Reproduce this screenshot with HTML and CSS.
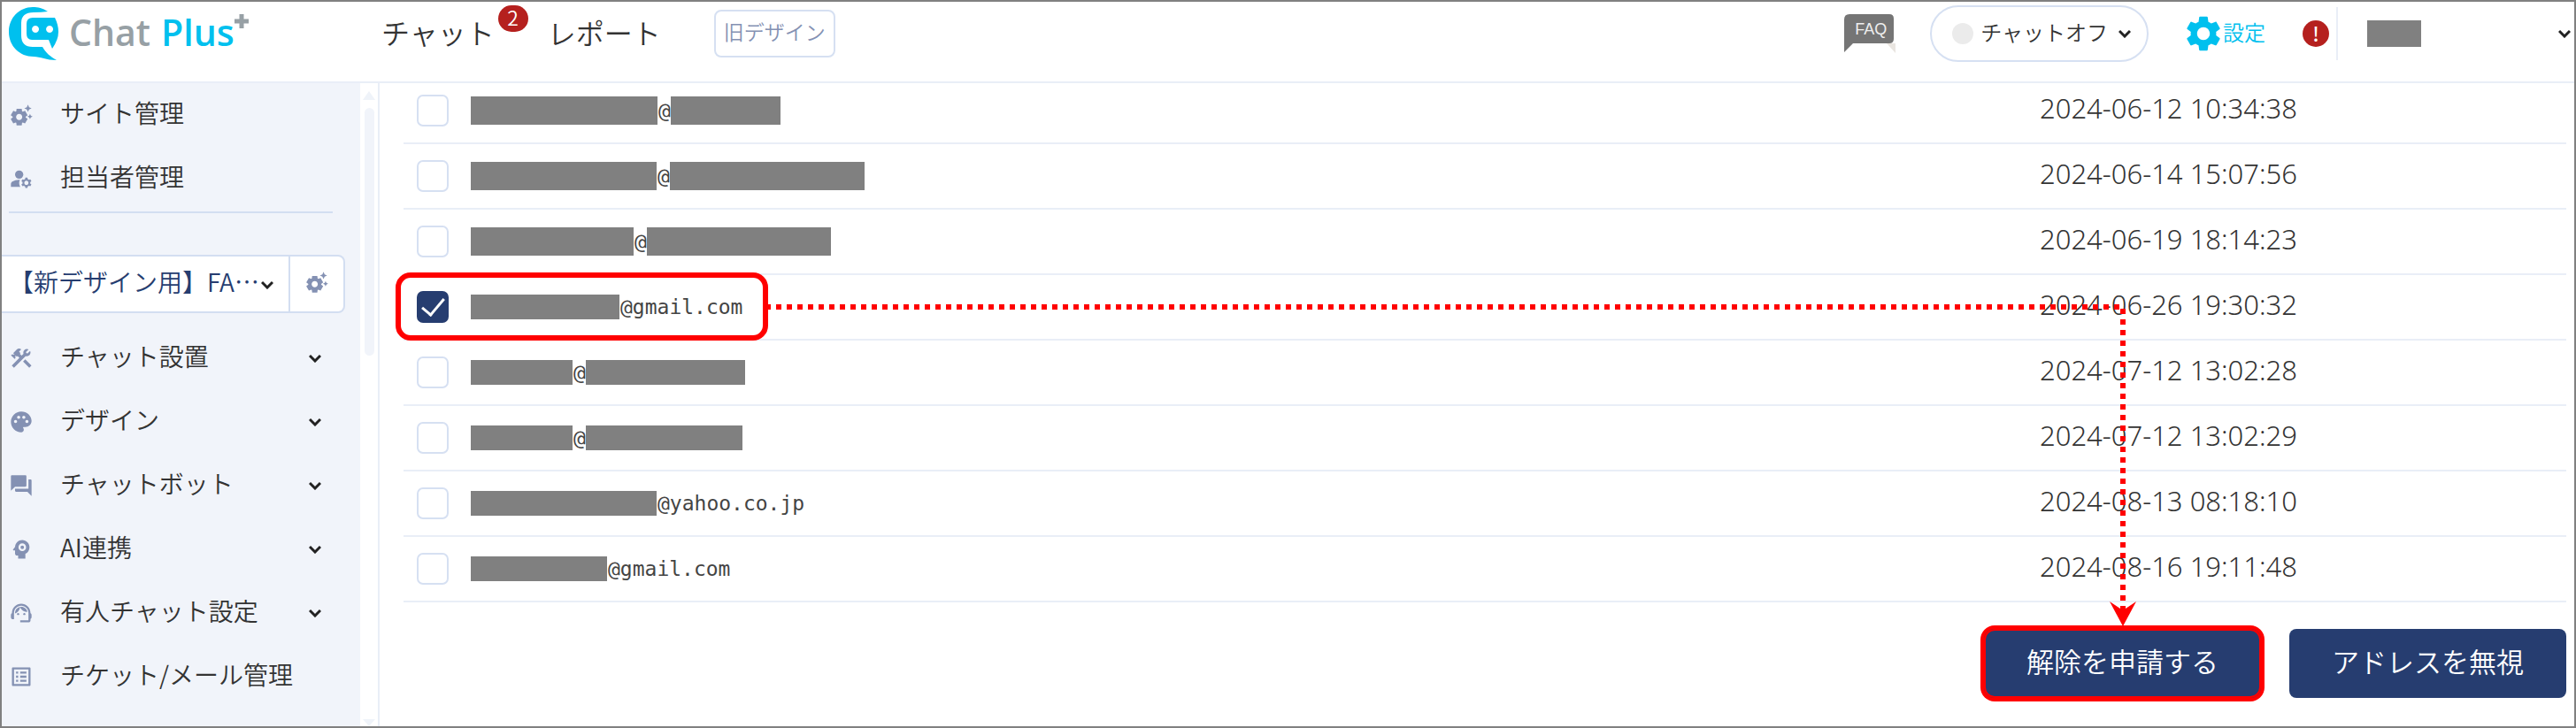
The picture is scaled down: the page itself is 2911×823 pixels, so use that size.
FILE: index.html
```html
<!DOCTYPE html>
<html lang="ja">
<head>
  <meta charset="utf-8">
  <title>Chat Plus</title>
  <link rel="stylesheet" href="styles.css">
</head>
<body>
  <svg class="sprite" aria-hidden="true">
    <symbol id="chevron" viewBox="0 0 14 10"><path d="M1 2l6 6 6-6" fill="none" stroke="currentColor" stroke-width="3"/></symbol>
    <symbol id="suggest" viewBox="0 0 24 24"><path d="M17.41 6.59L15 5.5l2.41-1.09L18.5 2l1.09 2.41L22 5.5l-2.41 1.09L18.5 9l-1.09-2.41zm3.87 6.13L20.5 11l-.78 1.72-1.72.78 1.72.78.78 1.72.78-1.72L23 13.5l-1.72-.78zm-5.04 1.65l1.94 1.47-2.5 4.33-2.24-.94c-.2.13-.42.26-.64.37l-.3 2.4h-5l-.3-2.41c-.22-.11-.43-.23-.64-.37l-2.24.94-2.5-4.33 1.94-1.47c-.01-.11-.01-.24-.01-.36s0-.25.01-.37l-1.94-1.47 2.5-4.33 2.24.94c.2-.13.42-.26.64-.37L7.5 6h5l.3 2.41c.22.11.43.23.64.37l2.24-.94 2.5 4.33-1.94 1.47c.01.12.01.24.01.37s0 .24-.01.36zM13 14c0-1.66-1.34-3-3-3s-3 1.34-3 3 1.34 3 3 3 3-1.34 3-3z"/></symbol>
  </svg>

  <header class="header">
    <a class="logo" href="#">
      <svg width="56" height="60" viewBox="0 0 56 60">
        <path fill="#00c0ee" d="M44 5C38 1 33 0 27 0C12 0 0 12 0 28C0 44 12 56 28 56C36 56 42 60 54 60C47 56 42 52 38 45H27Q14 45 14 32V18Q14 6 28 6Q37 6 44 5z"/>
        <path fill="#00c0ee" fill-rule="evenodd" d="M27 12H52Q56 20 56 28Q56 37 49 47L45 37H26Q20 37 20 30V19Q20 12 27 12zM30 21a4 4 0 1 0 .1 0zM46 21a4 4 0 1 0 .1 0z"/>
      </svg>
      <span class="logo-chat">Chat</span>
      <span class="logo-plus">Plus</span><svg class="logo-cross" width="16" height="16" viewBox="0 0 16 16"><path d="M8 0v16M0 8h16" stroke="#97a0a5" stroke-width="5"/></svg>
    </a>
    <nav class="nav">
      <a href="#">チャット<span class="count">2</span></a>
      <a href="#">レポート</a>
    </nav>
    <button class="old-design">旧デザイン</button>

    <div class="tools">
      <a class="faq" href="#">
        <svg width="58" height="44" viewBox="0 0 58 44">
          <path fill="#e9e5e0" d="M48 33h10v11z"/>
          <path fill="#757575" d="M6 0h45q5 0 5 5v23q0 5-5 5H10L0 43V6q0-6 6-6z"/>
        </svg>
        <span>FAQ</span>
      </a>
      <button class="chat-off"><i class="dot"></i><span class="label">チャットオフ</span><svg class="chevron"><use href="#chevron"/></svg></button>
      <a class="settings" href="#">
        <svg width="48" height="48" viewBox="0 0 24 24"><path d="M19.14 12.94c.04-.3.06-.61.06-.94 0-.32-.02-.64-.07-.94l2.03-1.58c.18-.14.23-.41.12-.61l-1.92-3.32c-.12-.22-.37-.29-.59-.22l-2.39.96c-.5-.38-1.03-.7-1.62-.94l-.36-2.54c-.04-.24-.24-.41-.48-.41h-3.84c-.24 0-.43.17-.47.41l-.36 2.54c-.59.24-1.13.57-1.62.94l-2.39-.96c-.22-.08-.47 0-.59.22L2.74 8.87c-.12.21-.08.47.12.61l2.03 1.58c-.05.3-.09.63-.09.94s.02.64.07.94l-2.03 1.58c-.18.14-.23.41-.12.61l1.92 3.32c.12.22.37.29.59.22l2.39-.96c.5.38 1.03.7 1.62.94l.36 2.54c.05.24.24.41.48.41h3.84c.24 0 .44-.17.47-.41l.36-2.54c.59-.24 1.13-.56 1.62-.94l2.39.96c.22.08.47 0 .59-.22l1.92-3.32c.12-.22.07-.47-.12-.61l-2.01-1.58zM12 15.6c-1.98 0-3.6-1.62-3.6-3.6s1.62-3.6 3.6-3.6 3.6 1.62 3.6 3.6-1.62 3.6-3.6 3.6z"/></svg>
        <span class="label">設定</span>
      </a>
      <span class="alert">!</span>
      <button class="account" aria-label="アカウント"><i class="account-name"></i><svg class="chevron"><use href="#chevron"/></svg></button>
    </div>
  </header>

  <div class="layout">
    <aside class="sidebar">
      <a class="item" href="#"><svg class="icon"><use href="#suggest"/></svg><span>サイト管理</span></a>
      <a class="item" href="#">
        <svg class="icon" viewBox="0 0 24 24"><circle cx="10" cy="8" r="4"/><path d="M10.67 13.02C10.45 13.01 10.23 13 10 13c-2.42 0-4.68.67-6.61 1.82C2.51 15.34 2 16.32 2 17.35V20h9.26C10.47 18.87 10 17.49 10 16c0-1.07.25-2.07.67-2.98zM20.75 16c0-.22-.03-.42-.06-.63l1.14-1.01-1-1.73-1.45.49c-.32-.27-.68-.48-1.08-.63L18 11h-2l-.3 1.49c-.4.15-.76.36-1.08.63l-1.45-.49-1 1.73 1.14 1.01c-.03.21-.06.41-.06.63s.03.42.06.63l-1.14 1.01 1 1.73 1.45-.49c.32.27.68.48 1.08.63L16 21h2l.3-1.49c.4-.15.76-.36 1.08-.63l1.45.49 1-1.73-1.14-1.01c.03-.21.06-.41.06-.63zM17 18c-1.1 0-2-.9-2-2s.9-2 2-2 2 .9 2 2-.9 2-2 2z"/></svg>
        <span>担当者管理</span>
      </a>
      <hr>
      <div class="site">
        <div class="site-select">
          <select aria-label="サイト"><option>【新デザイン用】FA…</option></select>
          <svg class="chevron"><use href="#chevron"/></svg>
        </div>
        <button aria-label="サイト設定"><svg class="icon"><use href="#suggest"/></svg></button>
      </div>
      <a class="item" href="#">
        <svg class="icon" viewBox="0 0 24 24"><path d="M13.78 15.3l6 6 2.11-2.16-6-6zM17.5 10c1.93 0 3.5-1.57 3.5-3.5 0-.58-.16-1.12-.41-1.6l-2.7 2.7-1.49-1.49 2.7-2.7c-.48-.25-1.02-.41-1.6-.41C15.57 3 14 4.57 14 6.5c0 .41.08.8.21 1.16l-1.85 1.85-1.78-1.78.71-.71-1.41-1.41L12 3.49c-1.17-1.17-3.07-1.17-4.24 0L4.22 7.03l1.41 1.41H2.81l-.71.71 3.54 3.54.71-.71V9.15l1.41 1.41.71-.71 1.78 1.78-7.41 7.41 2.12 2.12L16.34 9.79c.36.13.75.21 1.16.21z"/></svg>
        <span>チャット設置</span><svg class="chevron"><use href="#chevron"/></svg>
      </a>
      <a class="item" href="#">
        <svg class="icon" viewBox="0 0 24 24"><path d="M12 2C6.49 2 2 6.49 2 12s4.49 10 10 10c1.38 0 2.5-1.12 2.5-2.5 0-.61-.23-1.2-.64-1.67-.08-.1-.13-.21-.13-.33 0-.28.22-.5.5-.5H16c3.31 0 6-2.69 6-6 0-4.96-4.49-9-10-9zm5.5 11c-.83 0-1.5-.67-1.5-1.5s.67-1.5 1.5-1.5 1.5.67 1.5 1.5-.67 1.5-1.5 1.5zm-3-4c-.83 0-1.5-.67-1.5-1.5S13.67 6 14.5 6s1.5.67 1.5 1.5S15.33 9 14.5 9zM5 11.5c0-.83.67-1.5 1.5-1.5s1.5.67 1.5 1.5S7.33 13 6.5 13 5 12.33 5 11.5zm6-4c0 .83-.67 1.5-1.5 1.5S8 8.33 8 7.5 8.67 6 9.5 6s1.5.67 1.5 1.5z"/></svg>
        <span>デザイン</span><svg class="chevron"><use href="#chevron"/></svg>
      </a>
      <a class="item" href="#">
        <svg class="icon" viewBox="0 0 24 24"><path d="M21 6h-2v9H6v2c0 .55.45 1 1 1h11l4 4V7c0-.55-.45-1-1-1zm-4 6V3c0-.55-.45-1-1-1H3c-.55 0-1 .45-1 1v14l4-4h10c.55 0 1-.45 1-1z"/></svg>
        <span>チャットボット</span><svg class="chevron"><use href="#chevron"/></svg>
      </a>
      <a class="item" href="#">
        <svg class="icon" viewBox="0 0 24 24"><path d="M13 3C9.25 3 6.2 5.94 6.02 9.64L4.1 12.2c-.25.33-.01.8.4.8H6v3c0 1.1.9 2 2 2h1v3h7v-4.68c2.36-1.12 4-3.53 4-6.32 0-3.87-3.13-7-7-7z"/><circle cx="13" cy="10" r="2.7" fill="none" stroke="#f1f4fa" stroke-width="2"/></svg>
        <span>AI連携</span><svg class="chevron"><use href="#chevron"/></svg>
      </a>
      <a class="item" href="#">
        <svg class="icon" viewBox="0 0 24 24"><path d="M21 12.22C21 6.73 16.74 3 12 3c-4.69 0-9 3.65-9 9.28-.6.34-1 .98-1 1.72v2c0 1.1.9 2 2 2h1v-6.1c0-3.87 3.13-7 7-7s7 3.13 7 7V19h-8v2h8c1.1 0 2-.9 2-2v-1.22c.59-.31 1-.92 1-1.64v-2.3c0-.7-.41-1.31-1-1.62z"/><circle cx="9" cy="13" r="1"/><circle cx="15" cy="13" r="1"/><path d="M18 11.03C17.52 8.18 15.04 6 12.05 6c-3.03 0-6.29 2.51-6.03 6.45 2.47-1.01 4.33-3.21 4.86-5.89 1.31 2.63 4 4.44 7.12 4.47z"/></svg>
        <span>有人チャット設定</span><svg class="chevron"><use href="#chevron"/></svg>
      </a>
      <a class="item" href="#">
        <svg class="icon" viewBox="0 0 24 24"><path d="M19 5v14H5V5h14m1.1-2H3.9c-.5 0-.9.4-.9.9v16.2c0 .4.4.9.9.9h16.2c.4 0 .9-.5.9-.9V3.9c0-.5-.5-.9-.9-.9zM11 7h6v2h-6V7zm0 4h6v2h-6v-2zm0 4h6v2h-6v-2zM7 7h2v2H7zm0 4h2v2H7zm0 4h2v2H7z"/></svg>
        <span>チケット/メール管理</span>
      </a>
    </aside>
    <div class="scrollbar"><i class="up"></i><i class="thumb"></i><i class="down"></i></div>

    <main class="main">
      <table class="list">
        <tbody>
          <tr>
            <td class="check"><input type="checkbox" aria-label="アドレス1"></td>
            <td><div class="mail"><i class="mask tall" style="width:211px"></i>@<i class="mask tall" style="width:124px"></i></div></td>
            <td class="date">2024-06-12 10:34:38</td>
          </tr>
          <tr>
            <td class="check"><input type="checkbox" aria-label="アドレス2"></td>
            <td><div class="mail"><i class="mask tall" style="width:210px"></i>@<i class="mask tall" style="width:220px"></i></div></td>
            <td class="date">2024-06-14 15:07:56</td>
          </tr>
          <tr>
            <td class="check"><input type="checkbox" aria-label="アドレス3"></td>
            <td><div class="mail"><i class="mask tall" style="width:184px"></i>@<i class="mask tall" style="width:208px"></i></div></td>
            <td class="date">2024-06-19 18:14:23</td>
          </tr>
          <tr>
            <td class="check"><input type="checkbox" aria-label="アドレス4" checked></td>
            <td><div class="mail"><i class="mask" style="width:168px"></i>@gmail.com</div></td>
            <td class="date">2024-06-26 19:30:32</td>
          </tr>
          <tr>
            <td class="check"><input type="checkbox" aria-label="アドレス5"></td>
            <td><div class="mail"><i class="mask" style="width:115px"></i>@<i class="mask" style="width:180px"></i></div></td>
            <td class="date">2024-07-12 13:02:28</td>
          </tr>
          <tr>
            <td class="check"><input type="checkbox" aria-label="アドレス6"></td>
            <td><div class="mail"><i class="mask" style="width:115px"></i>@<i class="mask" style="width:177px"></i></div></td>
            <td class="date">2024-07-12 13:02:29</td>
          </tr>
          <tr>
            <td class="check"><input type="checkbox" aria-label="アドレス7"></td>
            <td><div class="mail"><i class="mask" style="width:210px"></i>@yahoo.co.jp</div></td>
            <td class="date">2024-08-13 08:18:10</td>
          </tr>
          <tr>
            <td class="check"><input type="checkbox" aria-label="アドレス8"></td>
            <td><div class="mail"><i class="mask" style="width:154px"></i>@gmail.com</div></td>
            <td class="date">2024-08-16 19:11:48</td>
          </tr>
        </tbody>
      </table>
      <div class="actions">
        <button class="btn marked">解除を申請する</button>
        <button class="btn">アドレスを無視</button>
      </div>

      <!-- step guide: selected row to the request button -->
      <div class="guide-box"></div>
      <div class="guide-across"></div>
      <div class="guide-down"></div>
      <svg class="guide-head" viewBox="0 0 30 28"><path d="M0 0l15 10L30 0 15 28z" fill="#f00"/></svg>
    </main>
  </div>
</body>
</html>
```

FILE: styles.css
```css
* {
  box-sizing: border-box;
}
body {
  margin: 0;
  min-height: 100vh;
  display: flex;
  flex-direction: column;
  border: 2px solid #808080;
  background: #fff;
  color: #333;
  font-family: "Noto Sans CJK JP", sans-serif;
  font-size: 28px;
  font-weight: 350;
}
a {
  color: inherit;
  text-decoration: none;
}
button, select {
  font: inherit;
  color: inherit;
  background: none;
  border: none;
  padding: 0;
  cursor: pointer;
}
.sprite {
  position: absolute;
  width: 0;
  height: 0;
}
.chevron {
  width: 14px;
  height: 10px;
  color: #222;
}
.icon {
  width: 28px;
  height: 28px;
  fill: #8491b3;
}

/* header */
.header {
  display: flex;
  align-items: center;
  height: 92px;
  padding: 4px 4px 22px 8px;
  border-bottom: 2px solid #e9eef7;
}
.logo {
  display: flex;
  align-items: center;
  width: 421px;
  font-family: "Open Sans", sans-serif;
  font-size: 41px;
  font-weight: 600;
  line-height: 56px;
}
.logo-chat {
  margin-left: 12px;
  padding-bottom: 4px;
  color: #97a0a5;
}
.logo-plus {
  margin-left: 12px;
  padding-bottom: 4px;
  color: #00c0ee;
}
.logo-cross {
  align-self: flex-start;
  margin-top: 8px;
}
.nav {
  display: flex;
  gap: 60px;
  padding-bottom: 4px;
  font-size: 32px;
  line-height: 60px;
}
.nav a {
  position: relative;
}
.count {
  position: absolute;
  top: 0;
  right: -38px;
  width: 34px;
  height: 30px;
  border-radius: 15px;
  background: #b5201e;
  color: #fff;
  font-size: 23px;
  line-height: 26px;
  text-align: center;
}
.old-design {
  height: 54px;
  margin-left: 60px;
  padding: 0 9px 6px;
  border: 2px solid #d6e0f2;
  border-radius: 8px;
  color: #8491b3;
  font-size: 23px;
}
.tools {
  display: flex;
  align-items: center;
  margin-left: auto;
  font-size: 24px;
}
.label {
  padding-bottom: 5px;
}
.faq {
  position: relative;
  height: 44px;
  margin-right: 39px;
}
.faq span {
  position: absolute;
  top: 6px;
  left: 12px;
  color: #eee;
  font: 18px/22px "Liberation Sans", sans-serif;
}
.faq svg {
  display: block;
}
.chat-off {
  display: flex;
  align-items: center;
  height: 64px;
  padding: 0 18px 0 23px;
  border: 2px solid #d6e0f2;
  border-radius: 32px;
}
.chat-off .chevron {
  margin-left: 12px;
}
.dot {
  width: 24px;
  height: 24px;
  margin-right: 8px;
  border-radius: 50%;
  background: #ebebeb;
}
.settings {
  display: flex;
  align-items: center;
  margin-left: 38px;
  color: #00c0ee;
}
.settings svg {
  margin-right: -2px;
  fill: #00c0ee;
}
.alert {
  width: 30px;
  height: 30px;
  margin-left: 42px;
  border-radius: 50%;
  background: #b5201e;
  color: #fff;
  font-size: 22px;
  font-weight: 500;
  line-height: 29px;
  text-align: center;
}
.account {
  display: flex;
  align-items: center;
  justify-content: space-between;
  width: 265px;
  height: 60px;
  margin-left: 8px;
  padding-left: 33px;
  border-left: 2px solid #e9eef7;
}
.account-name {
  width: 61px;
  height: 30px;
  background: #808080;
}

/* layout */
.layout {
  display: flex;
  flex: 1;
}
.sidebar {
  width: 405px;
  background: #f1f4fa;
}
.item {
  display: flex;
  align-items: center;
  height: 72px;
  padding: 0 44px 0 8px;
}
.item span {
  margin-left: 30px;
  padding-bottom: 6px;
  line-height: 40px;
}
.item .chevron {
  margin-left: auto;
}
.sidebar hr {
  height: 2px;
  margin: 1px 31px 47px 8px;
  border: none;
  background: #d3def1;
}
.site {
  display: flex;
  height: 66px;
  margin: 0 17px 15px 0;
  border: 2px solid #d3def1;
  border-left: none;
  border-radius: 0 8px 8px 0;
  background: #fff;
}
.site-select {
  position: relative;
  flex: 1;
  color: #263d70;
}
.site-select select {
  width: 100%;
  height: 58px;
  padding: 0 0 2px 8px;
  appearance: none;
}
.site-select .chevron {
  position: absolute;
  top: 27px;
  right: 17px;
  pointer-events: none;
}
.site button {
  width: 62px;
  border-left: 2px solid #d3def1;
}
.scrollbar {
  display: flex;
  flex-direction: column;
  align-items: center;
  width: 22px;
  padding-top: 9px;
  border-right: 2px solid #e9eef7;
}
.up, .down {
  border: 7px solid transparent;
}
.up {
  border-top: none;
  border-bottom: 10px solid #eff3f9;
}
.down {
  margin-top: auto;
  border-top: 8px solid #eff3f9;
  border-bottom: none;
}
.thumb {
  width: 11px;
  height: 280px;
  margin-top: 9px;
  border-radius: 6px;
  background: #f1f4fa;
}

/* address list */
.main {
  position: relative;
  flex: 1;
  padding: 0 9px 0 27px;
}
.list {
  width: 100%;
  margin-top: -6px;
  border-collapse: collapse;
}
.list td {
  height: 74px;
  padding: 0;
  border-bottom: 2px solid #e9eef7;
}
.list .check {
  width: 76px;
  padding-left: 15px;
}
.check input {
  display: block;
  width: 36px;
  height: 36px;
  margin: 0;
  appearance: none;
  border: 2px solid #d6e0f2;
  border-radius: 7px;
  background: #fff;
}
.check input:checked {
  display: grid;
  place-items: center;
  border-color: #263d70;
  background: #263d70;
}
.check input:checked::after {
  content: "";
  width: 22px;
  height: 11px;
  margin-bottom: 7px;
  border-left: 3px solid #fff;
  border-bottom: 3px solid #fff;
  transform: rotate(-50deg);
}
.mail {
  display: flex;
  align-items: center;
  color: #444;
  font-family: "DejaVu Sans Mono", monospace;
  font-size: 23px;
}
.mask {
  height: 28px;
  margin-right: 1px;
  background: #808080;
}
.mask.tall {
  height: 32px;
}
.list .date {
  width: 595px;
  padding-bottom: 6px;
  color: #333;
  font-family: "Noto Sans", sans-serif;
  font-size: 31px;
  line-height: 40px;
}
.actions {
  display: flex;
  justify-content: flex-end;
  gap: 32px;
  margin-top: 30px;
}
.btn {
  height: 78px;
  padding: 0 48px 8px;
  border-radius: 8px;
  background: #263d70;
  color: #fff;
  font-size: 31px;
}
.marked {
  border-radius: 12px;
  box-shadow: 0 0 0 4px #f00, inset 0 0 0 2px #f00;
}

/* red guide marks over the list */
.guide-box {
  position: absolute;
  top: 214px;
  left: 18px;
  width: 421px;
  height: 77px;
  border: 6px solid #f00;
  border-radius: 17px;
}
.guide-across, .guide-down {
  position: absolute;
  background: repeating-linear-gradient(90deg, #f00 0 6px, transparent 6px 12px);
}
.guide-across {
  top: 250px;
  left: 436px;
  right: 513px;
  height: 6px;
}
.guide-down {
  top: 255px;
  right: 507px;
  bottom: 127px;
  width: 6px;
  background: repeating-linear-gradient(#f00 0 6px, transparent 6px 12px);
}
.guide-head {
  position: absolute;
  top: 586px;
  right: 495px;
  width: 30px;
  height: 28px;
}
```
